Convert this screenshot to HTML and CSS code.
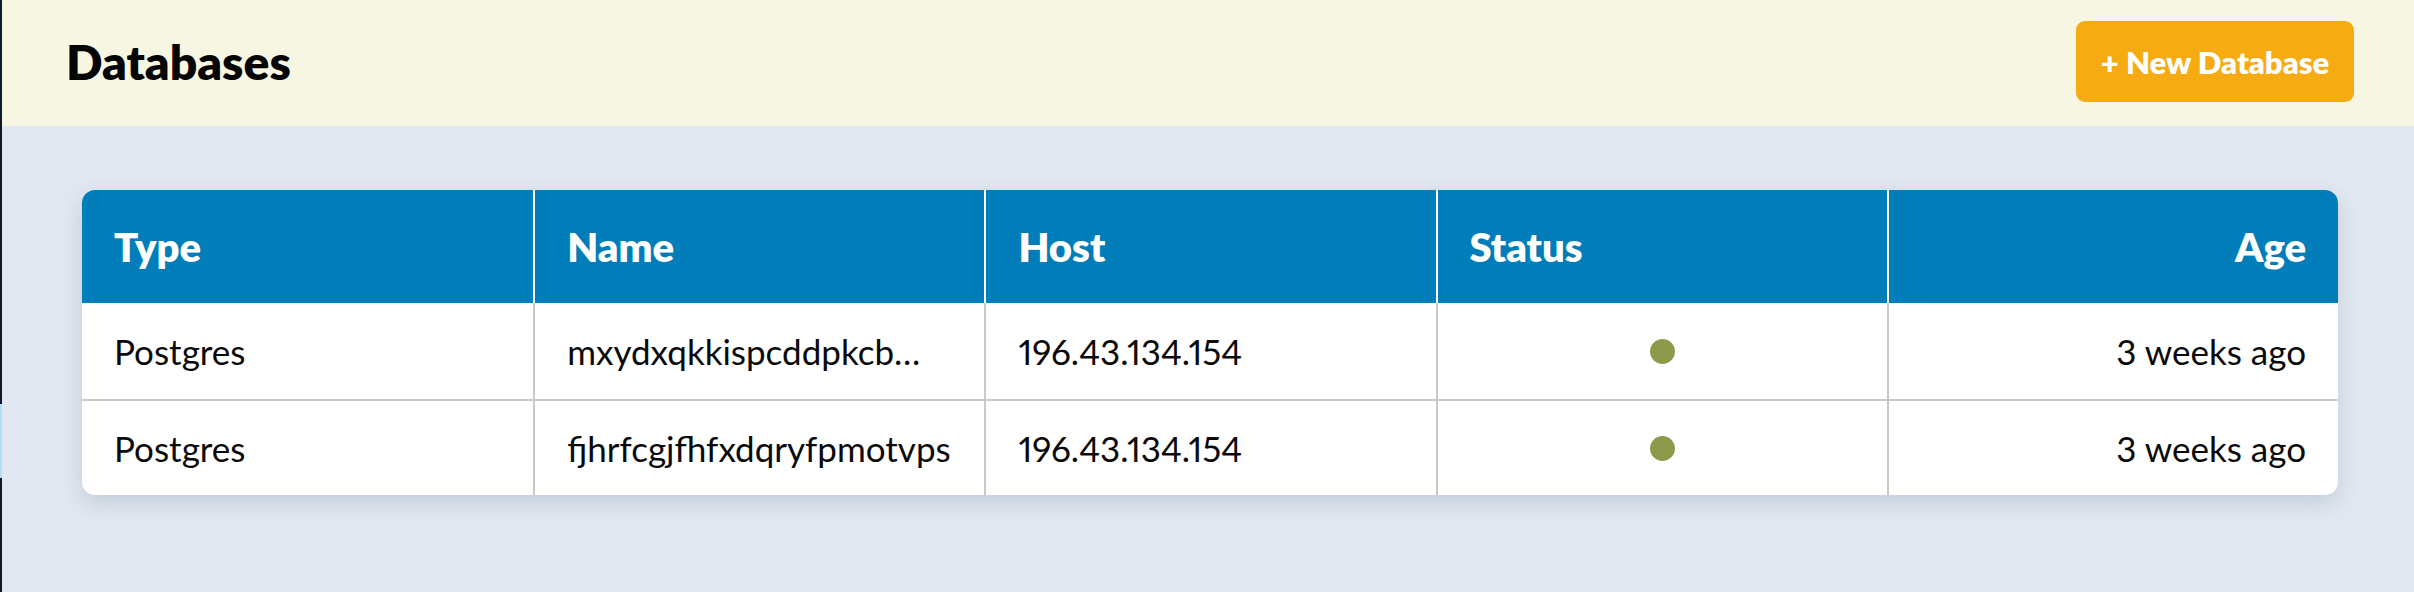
FILE: index.html
```html
<!DOCTYPE html>
<html lang="en">
<head>
<meta charset="utf-8">
<title>Databases</title>
<link rel="stylesheet" href="styles.css">
</head>
<body>
<div class="app">
  <aside class="rail">
    <div class="rail-top"></div>
    <div class="rail-active"></div>
    <div class="rail-bottom"></div>
  </aside>
  <div class="content">
    <header class="topbar">
      <h1 class="title">Databases</h1>
      <button class="btn-new">+ New Database</button>
    </header>
    <main class="main">
      <div class="card">
        <table class="db-table">
          <thead>
            <tr>
              <th>Type</th>
              <th>Name</th>
              <th>Host</th>
              <th>Status</th>
              <th class="right">Age</th>
            </tr>
          </thead>
          <tbody>
            <tr>
              <td>Postgres</td>
              <td class="trunc">mxydxqkkispcddpkcb…</td>
              <td>196.43.134.154</td>
              <td class="center"><span class="dot"></span></td>
              <td class="right">3 weeks ago</td>
            </tr>
            <tr>
              <td>Postgres</td>
              <td class="trunc">fjhrfcgjfhfxdqryfpmotvps</td>
              <td>196.43.134.154</td>
              <td class="center"><span class="dot"></span></td>
              <td class="right">3 weeks ago</td>
            </tr>
          </tbody>
        </table>
      </div>
    </main>
  </div>
</div>
</body>
</html>
```

FILE: styles.css
```css
* { box-sizing: border-box; }
html, body { margin: 0; padding: 0; }
body {
  font-family: "Lato", "Liberation Sans", sans-serif;
  background: #e1e8f1;
  color: #0a0a0a;
  font-variant-numeric: proportional-nums;
}
.app {
  display: flex;
  min-height: 592px;
}
.rail {
  width: 2px;
  display: flex;
  flex-direction: column;
  flex-shrink: 0;
}
.rail-top { height: 404px; background: #0c1a2a; }
.rail-active { height: 74px; background: #aedffa; }
.rail-bottom { flex: 1; background: #0c1a2a; }
.content {
  flex: 1;
  display: flex;
  flex-direction: column;
}
.topbar {
  height: 126px;
  background: #f7f6e3;
  display: flex;
  align-items: center;
  justify-content: space-between;
  padding: 0 60px 0 64px;
}
.title {
  margin: 0;
  font-size: 48px;
  font-weight: 800;
  color: #050505;
  margin-top: -4px;
}
.btn-new {
  font-family: inherit;
  font-size: 31px;
  font-weight: 800;
  color: #fff;
  background: #f7ab13;
  border: 0;
  border-radius: 9px;
  width: 278px;
  height: 81px;
  margin-top: -3px;
  padding: 0;
}
.main {
  padding: 64px 76px 40px 80px;
}
.card {
  border-radius: 13px;
  overflow: hidden;
  background: #fff;
  box-shadow: 0 8px 22px rgba(40, 60, 90, 0.16);
}
.db-table {
  width: 100%;
  table-layout: fixed;
  border-collapse: separate;
  border-spacing: 0;
}
.db-table th {
  height: 113px;
  padding: 0 32px;
  background: #017db9;
  color: #fff;
  font-size: 40px;
  font-weight: 800;
  text-align: left;
}
.db-table th + th { border-left: 2px solid #ffffff; }
.db-table td {
  height: 96px;
  padding: 0 32px;
  font-size: 35px;
  font-weight: 400;
  white-space: nowrap;
  vertical-align: middle;
}
.db-table td + td { border-left: 2px solid #c8c8c8; }
.db-table tbody tr + tr td { border-top: 2px solid #c8c8c8; }
.db-table .right { text-align: right; }
.db-table .center { text-align: center; }
.trunc {
  overflow: hidden;
  text-overflow: ellipsis;
}
.dot {
  display: block;
  margin: 0 auto;
  width: 25px;
  height: 25px;
  border-radius: 50%;
  background: #8b9a4b;
}
```
